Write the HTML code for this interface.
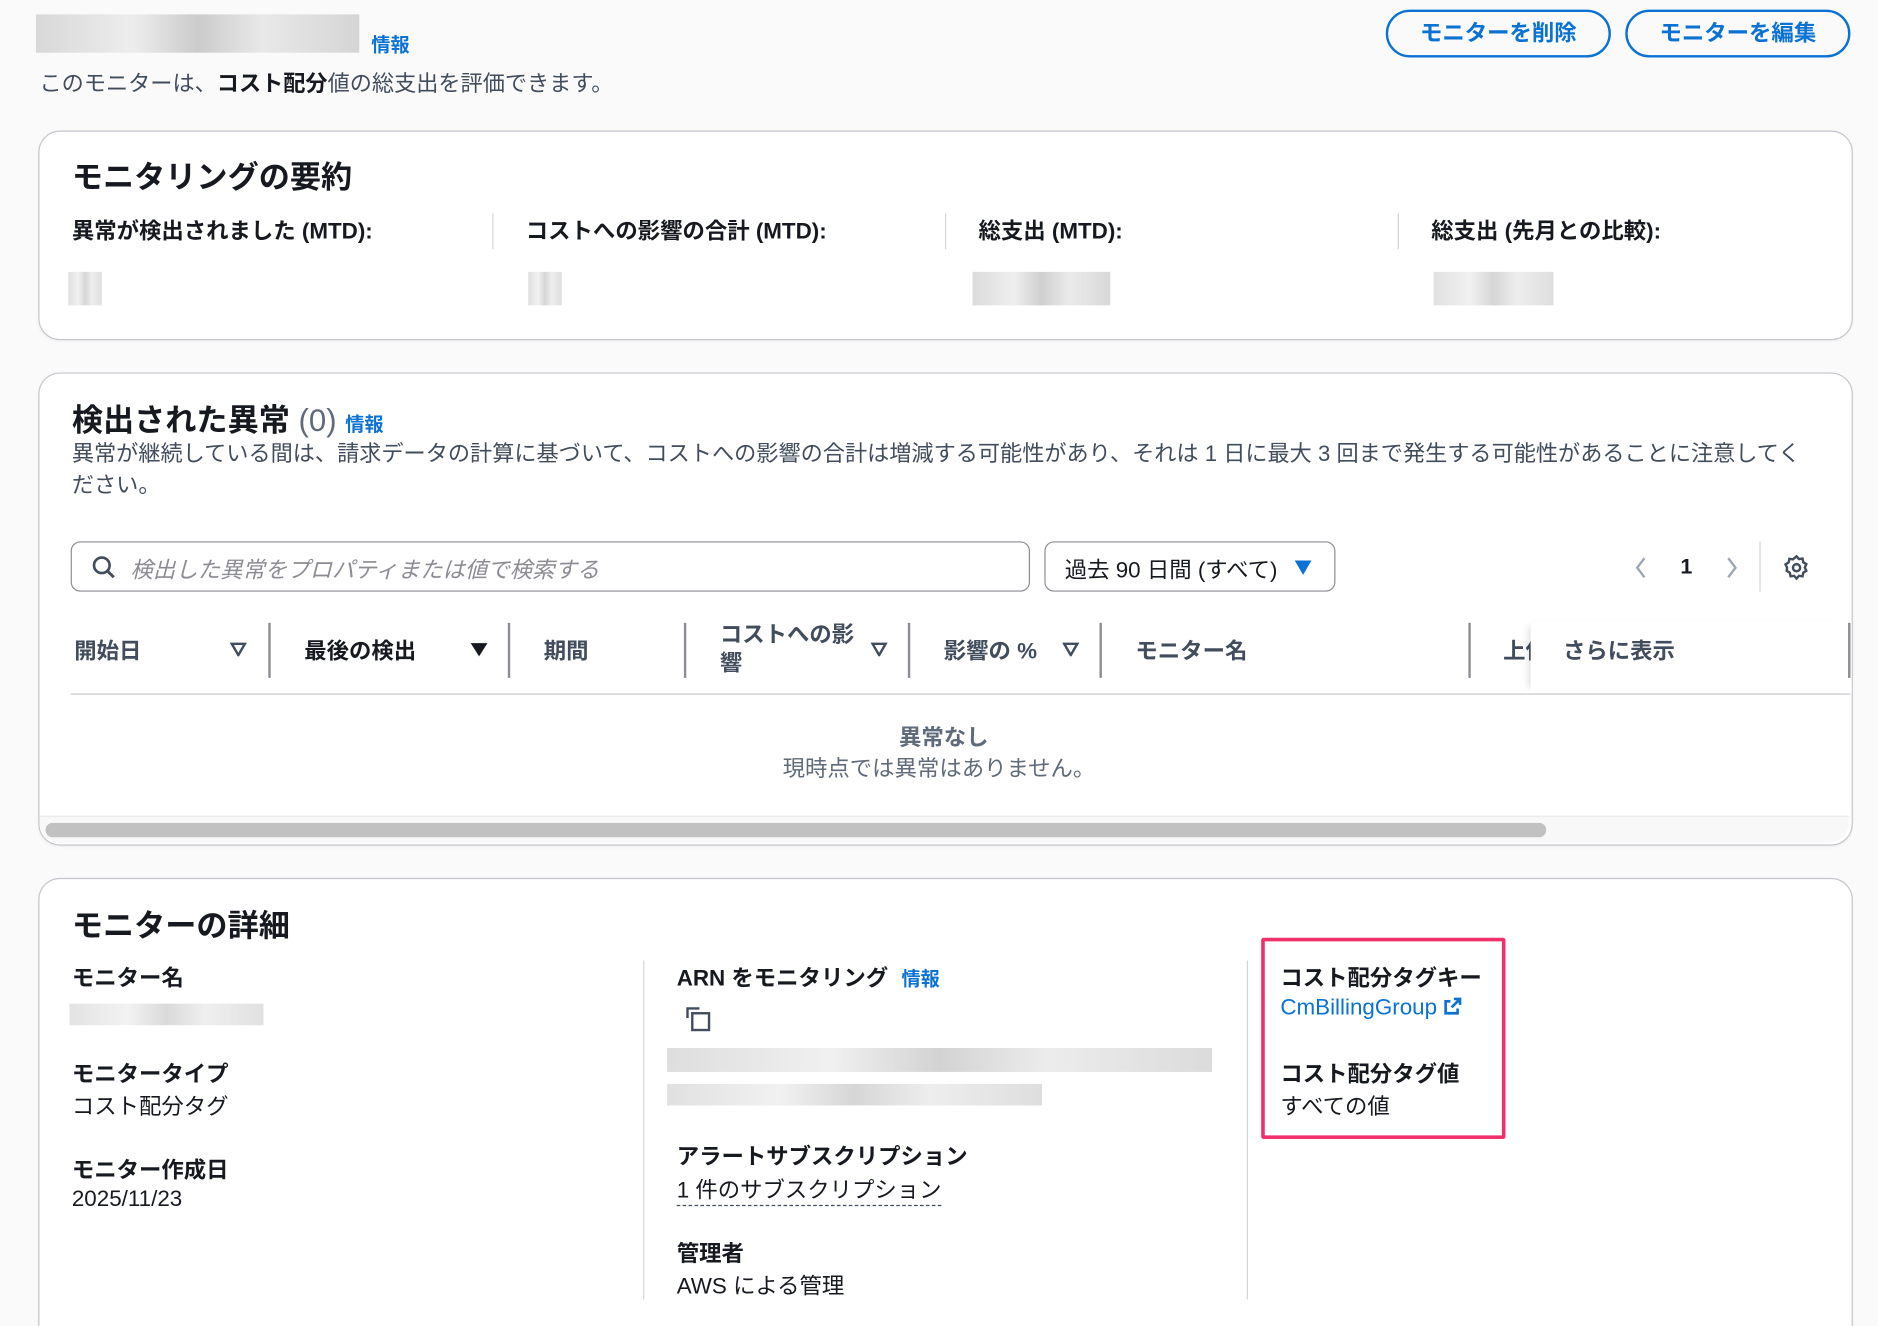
<!DOCTYPE html>
<html><head><meta charset="utf-8"><style>
html,body{margin:0;padding:0;background:#fafafa;overflow:hidden;width:1878px;height:1326px}
#w{position:absolute;left:0;top:0;width:1568px;height:1107px;overflow:hidden;transform:scale(1.19770);transform-origin:0 0;font-family:"Liberation Sans","Noto Sans CJK JP",sans-serif;color:#16191f}
.a{position:absolute;white-space:nowrap}
.card{position:absolute;background:#fff;border:1px solid #c6c6cd;border-radius:18px;box-shadow:0 1px 2px rgba(0,0,0,.05)}
.b{font-weight:bold}
.info{color:#0972d3;font-size:16px;font-weight:bold}
.btn{position:absolute;border:2px solid #0972d3;border-radius:22px;color:#0972d3;font-weight:bold;font-size:18.7px;text-align:center;line-height:36px;box-sizing:border-box;height:40px}
.h2{font-size:26px;font-weight:bold}
.lbl{font-size:18.7px;font-weight:bold}
.blur{position:absolute;background:linear-gradient(90deg,#ccc,#e8e8e8 30%,#bbb 50%,#e2e2e2 70%,#c8c8c8)}
.vd{position:absolute;width:1px;background:#d5d5da}
.hs{position:absolute;width:2px;background:#8c8c94;top:520px;height:46px}
.th{font-size:18.7px;font-weight:bold;color:#414d5c}
.txt{font-size:18.7px}
</style></head><body><div id="w">
<div class="blur" style="left:30px;top:12px;width:270px;height:32px;opacity:.75"></div>
<div class="a info" style="left:310px;top:24px">情報</div>
<div class="a" style="left:33px;top:56px;font-size:18.5px;color:#414d5c">このモニターは、<b style="color:#16191f">コスト配分</b>値の総支出を評価できます。</div>
<div class="btn" style="left:1157px;top:8px;width:188px">モニターを削除</div>
<div class="btn" style="left:1357px;top:8px;width:188px">モニターを編集</div>

<div class="card" style="left:32px;top:109px;width:1513px;height:173px"></div>
<div class="a h2" style="left:60px;top:128px">モニタリングの要約</div>
<div class="a lbl" style="left:60px;top:178px">異常が検出されました (MTD):</div>
<div class="a lbl" style="left:439px;top:178px">コストへの影響の合計 (MTD):</div>
<div class="a lbl" style="left:817px;top:178px">総支出 (MTD):</div>
<div class="a lbl" style="left:1195px;top:178px">総支出 (先月との比較):</div>
<div class="vd" style="left:411px;top:178px;height:30px"></div>
<div class="vd" style="left:789px;top:178px;height:30px"></div>
<div class="vd" style="left:1167px;top:178px;height:30px"></div>
<div class="blur" style="left:57px;top:227px;width:28px;height:28px;opacity:.6"></div>
<div class="blur" style="left:441px;top:227px;width:28px;height:28px;opacity:.6"></div>
<div class="blur" style="left:812px;top:227px;width:115px;height:28px;opacity:.7"></div>
<div class="blur" style="left:1197px;top:227px;width:100px;height:28px;opacity:.6"></div>

<div class="card" style="left:32px;top:311px;width:1513px;height:393px"></div>
<div class="a h2" style="left:60px;top:331px">検出された異常 <span style="font-weight:normal;color:#5f6b7a">(0)</span> <span class="info">情報</span></div>
<div class="a" style="left:60px;top:366px;font-size:18.5px;color:#414d5c;line-height:26px;white-space:normal;width:1450px">異常が継続している間は、請求データの計算に基づいて、コストへの影響の合計は増減する可能性があり、それは 1 日に最大 3 回まで発生する可能性があることに注意してください。</div>
<div class="a" style="left:59px;top:452px;width:801px;height:42px;border:1px solid #8c8c94;border-radius:8px;box-sizing:border-box"></div>
<svg class="a" style="left:76px;top:463px" width="22" height="22" viewBox="0 0 22 22"><circle cx="9" cy="9" r="6.5" fill="none" stroke="#414d5c" stroke-width="2.2"/><path d="M14 14l5 5" stroke="#414d5c" stroke-width="2.4"/></svg>
<div class="a" style="left:109px;top:461px;font-size:18.7px;font-style:italic;color:#8c8c94">検出した異常をプロパティまたは値で検索する</div>
<div class="a" style="left:872px;top:452px;width:243px;height:42px;border:1px solid #8c8c94;border-radius:8px;box-sizing:border-box"></div>
<div class="a txt" style="left:889px;top:461px">過去 90 日間 (すべて)</div>
<svg class="a" style="left:1080px;top:467px" width="16" height="14"><path d="M1 1h14L8 13z" fill="#0972d3"/></svg>
<svg class="a" style="left:1364px;top:464px" width="12" height="20"><path d="M9 2L3 10l6 8" fill="none" stroke="#9ba7b6" stroke-width="2"/></svg>
<div class="a b" style="left:1403px;top:463px;font-size:18px">1</div>
<svg class="a" style="left:1440px;top:464px" width="12" height="20"><path d="M3 2l6 8-6 8" fill="none" stroke="#9ba7b6" stroke-width="2"/></svg>
<div class="vd" style="left:1469px;top:452px;height:42px"></div>
<svg class="a" style="left:1488px;top:462px" width="24" height="24" viewBox="0 0 24 24"><path d="M12 2.5l2 2.3 3-.4.6 3 2.6 1.6-1.3 2.8 1.3 2.8-2.6 1.6-.6 3-3-.4-2 2.3-2-2.3-3 .4-.6-3-2.6-1.6L4.1 12 2.8 9.2 5.4 7.6l.6-3 3 .4z" fill="none" stroke="#414d5c" stroke-width="2"/><circle cx="12" cy="12" r="3" fill="none" stroke="#414d5c" stroke-width="2"/></svg>

<div class="a th" style="left:62px;top:529px">開始日</div>
<div class="a th" style="left:254px;top:529px;color:#16191f">最後の検出</div>
<div class="a th" style="left:454px;top:529px">期間</div>
<div class="a th" style="left:601px;top:518px;line-height:24px">コストへの影<br>響</div>
<div class="a th" style="left:788px;top:529px">影響の %</div>
<div class="a th" style="left:948px;top:529px">モニター名</div>
<div class="a th" style="left:1255px;top:529px">上位</div>
<div class="a" style="left:1278px;top:519px;width:268px;height:59px;background:#fff;box-shadow:-6px 0 6px -4px rgba(0,0,0,.12)"></div>
<div class="a th" style="left:1305px;top:529px">さらに表示</div>
<svg class="a" style="left:192px;top:536px" width="14" height="12"><path d="M1.5 1.5h11L7 11z" fill="none" stroke="#414d5c" stroke-width="2"/></svg>
<svg class="a" style="left:392px;top:536px" width="16" height="13"><path d="M1 1h14L8 12z" fill="#16191f"/></svg>
<svg class="a" style="left:727px;top:536px" width="14" height="12"><path d="M1.5 1.5h11L7 11z" fill="none" stroke="#414d5c" stroke-width="2"/></svg>
<svg class="a" style="left:887px;top:536px" width="14" height="12"><path d="M1.5 1.5h11L7 11z" fill="none" stroke="#414d5c" stroke-width="2"/></svg>
<div class="hs" style="left:224px"></div><div class="hs" style="left:424px"></div><div class="hs" style="left:571px"></div><div class="hs" style="left:758px"></div><div class="hs" style="left:918px"></div><div class="hs" style="left:1226px"></div><div class="hs" style="left:1543px"></div>
<div class="a" style="left:59px;top:579px;width:1486px;height:1px;background:#c6c6cd"></div>
<div class="a b" style="left:0;width:1576px;text-align:center;top:601px;font-size:18.7px;color:#5f6b7a">異常なし</div>
<div class="a" style="left:0;width:1568px;text-align:center;top:627px;font-size:18.7px;color:#5f6b7a">現時点では異常はありません。</div>
<div class="a" style="left:33px;top:681px;width:1511px;height:22px;background:#f8f8f8;border-top:1px solid #e8e8e8;border-radius:0 0 18px 18px"></div>
<div class="a" style="left:38px;top:687px;width:1253px;height:12px;background:#c1c1c1;border-radius:6px"></div>

<div class="card" style="left:32px;top:733px;width:1513px;height:420px"></div>
<div class="a h2" style="left:60px;top:753px">モニターの詳細</div>
<div class="vd" style="left:537px;top:802px;height:283px"></div>
<div class="vd" style="left:1041px;top:802px;height:283px"></div>
<div class="a lbl" style="left:60px;top:802px">モニター名</div>
<div class="blur" style="left:58px;top:838px;width:162px;height:18px;opacity:.55"></div>
<div class="a lbl" style="left:60px;top:882px">モニタータイプ</div>
<div class="a txt" style="left:60px;top:909px">コスト配分タグ</div>
<div class="a lbl" style="left:60px;top:962px">モニター作成日</div>
<div class="a txt" style="left:60px;top:990px">2025/11/23</div>
<div class="a lbl" style="left:565px;top:802px">ARN をモニタリング <span class="info" style="margin-left:6px">情報</span></div>
<svg class="a" style="left:572px;top:840px" width="24" height="24"><path d="M2 10V2h10" fill="none" stroke="#414d5c" stroke-width="2"/><rect x="6" y="6" width="14" height="14" fill="none" stroke="#414d5c" stroke-width="2"/></svg>
<div class="blur" style="left:557px;top:875px;width:455px;height:20px;opacity:.65"></div>
<div class="blur" style="left:557px;top:905px;width:313px;height:18px;opacity:.6"></div>
<div class="a lbl" style="left:565px;top:951px">アラートサブスクリプション</div>
<div class="a txt" style="left:565px;top:979px;border-bottom:1px dashed #414d5c">1 件のサブスクリプション</div>
<div class="a lbl" style="left:565px;top:1032px">管理者</div>
<div class="a txt" style="left:565px;top:1059px">AWS による管理</div>
<div class="a" style="left:1053px;top:783px;width:204px;height:168px;border:3px solid #f0306a;box-sizing:border-box;border-radius:2px"></div>
<div class="a lbl" style="left:1069px;top:802px">コスト配分タグキー</div>
<div class="a txt" style="left:1069px;top:830px;color:#0972d3">CmBillingGroup <svg width="16" height="16" style="vertical-align:-1px"><path d="M9 2h5v5M14 2L7 9M12 10v4H2V4h4" fill="none" stroke="#0972d3" stroke-width="2.2"/></svg></div>
<div class="a lbl" style="left:1069px;top:882px">コスト配分タグ値</div>
<div class="a txt" style="left:1069px;top:909px">すべての値</div>
</div></body></html>
